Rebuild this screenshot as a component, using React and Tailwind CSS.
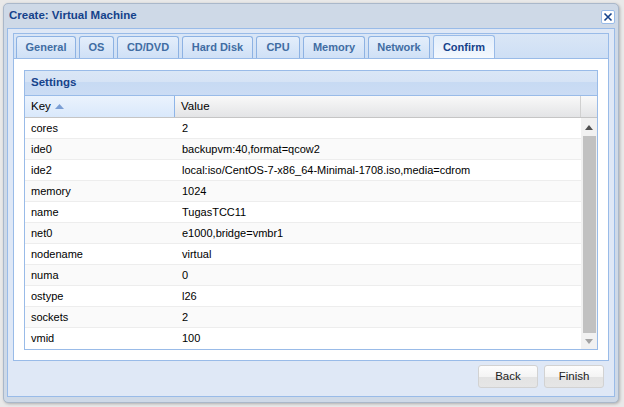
import React from 'react';

const tabs = [
  { label: 'General', w: 'w-[60px]' },
  { label: 'OS', w: 'w-[35px]' },
  { label: 'CD/DVD', w: 'w-[62px]' },
  { label: 'Hard Disk', w: 'w-[71px]' },
  { label: 'CPU', w: 'w-[44px]' },
  { label: 'Memory', w: 'w-[62px]' },
  { label: 'Network', w: 'w-[62px]' },
  { label: 'Confirm', w: 'w-[62px]', active: true },
];

const rows = [
  ['cores', '2'],
  ['ide0', 'backupvm:40,format=qcow2'],
  ['ide2', 'local:iso/CentOS-7-x86_64-Minimal-1708.iso,media=cdrom'],
  ['memory', '1024'],
  ['name', 'TugasTCC11'],
  ['net0', 'e1000,bridge=vmbr1'],
  ['nodename', 'virtual'],
  ['numa', '0'],
  ['ostype', 'l26'],
  ['sockets', '2'],
  ['vmid', '100'],
];

function Tab({ label, w, active }) {
  return (
    <div
      className={`${w} rounded-t-[3px] border border-b-0 flex items-center justify-center text-[11px] font-bold ${
        active
          ? 'h-[23px] border-[#99bbe8] bg-gradient-to-b from-[#e3eefb] to-[#f3f8fe] text-[#15428b]'
          : 'h-[22px] border-[#8db2e3] bg-gradient-to-b from-[#e4eefb] to-[#cfe0f6] text-[#416da3]'
      }`}
    >
      {label}
    </div>
  );
}

function Button({ children }) {
  return (
    <button className="w-[60px] h-[23px] rounded-[3px] border border-[#d2d2d2] bg-[linear-gradient(#fdfdfd_0%,#f4f4f4_50%,#e3e3e3_51%,#e6e6e6_100%)] text-[11.5px] text-[#222]">
      {children}
    </button>
  );
}

export default function App() {
  return (
    <div
      className="w-[624px] h-[407px] bg-[#e9e9e9] pl-[3px] pt-[3px] overflow-hidden"
      style={{ fontFamily: '"Liberation Sans", Arial, sans-serif' }}
    >
      <div className="w-[616px] h-[400px] rounded-[5px] border border-[#aab8ca] bg-[#ced9e7] flex flex-col shadow-[1px_1px_3px_rgba(0,0,0,0.25)]">
        {/* header */}
        <div className="h-[24px] flex items-center justify-between pl-[5px] pr-[3px]">
          <span className="text-[11.5px] font-bold text-[#15428b]">Create: Virtual Machine</span>
          <div className="w-[14px] h-[14px] mt-[2px] rounded-[2px] border border-[#99bbe8] bg-white flex items-center justify-center">
            <svg width="10" height="10" viewBox="0 0 10 10">
              <path d="M1.5 1.5 L8.5 8.5 M8.5 1.5 L1.5 8.5" stroke="#15428b" strokeWidth="1.6" />
            </svg>
          </div>
        </div>

        {/* body */}
        <div className="mx-[3px] mb-[5px] flex-1 border border-[#99bbe8] bg-[#dfe8f6] flex flex-col px-[5px] pt-[4px]">
          <div className="h-[328px] border border-[#99bbe8] flex flex-col">
            <div className="h-[25px] bg-gradient-to-b from-[#dae6f6] to-[#cedff5] flex items-end gap-[3px] pl-[2px] border-b border-[#99bbe8]">
              {tabs.map((t) => (
                <Tab key={t.label} {...t} />
              ))}
            </div>
            <div className="flex-1 bg-white pt-[11px] pl-[10px] pr-[10px] pb-[9px]">
              <div className="h-[280px] border border-[#99bbe8] flex flex-col">
                <div className="h-[25px] bg-[linear-gradient(#dae7f6_0%,#d6e3f5_45%,#c7daf3_46%,#cbdcf4_100%)] border-b border-[#99bbe8] flex items-center pl-[6px] text-[11.5px] font-bold text-[#15428b]">
                  Settings
                </div>
                <div className="h-[22px] flex border-b border-[#c5c5c5] text-[11.5px] text-black">
                  <div className="w-[150px] bg-gradient-to-b from-[#ebf3fd] to-[#d9e8fb] border-r border-[#8eb5e8] flex items-center pl-[6px] gap-[4px]">
                    Key
                    <svg width="9" height="5" viewBox="0 0 9 5">
                      <path d="M0 5 L4.5 0 L9 5 Z" fill="#7b9ed4" />
                    </svg>
                  </div>
                  <div className="flex-1 bg-gradient-to-b from-[#f9f9f9] to-[#e3e4e6] border-r border-[#d0d0d0] flex items-center pl-[6px]">
                    Value
                  </div>
                  <div className="w-[16px] bg-gradient-to-b from-[#f9f9f9] to-[#e3e4e6]" />
                </div>
                <div className="flex-1 flex">
                  <div className="flex-1 flex flex-col">
                    {rows.map(([k, v], i) => (
                      <div
                        key={k}
                        className={`h-[21px] flex items-center text-[11px] text-black ${
                          i < rows.length - 1 ? 'border-b border-[#ededed]' : ''
                        } ${i % 2 === 1 ? 'bg-[#fafafa]' : 'bg-white'}`}
                      >
                        <div className="w-[150px] pl-[6px]">{k}</div>
                        <div className="flex-1 pl-[7px]">{v}</div>
                      </div>
                    ))}
                  </div>
                  <div className="w-[16px] flex flex-col items-center bg-[#f1f1f1]">
                    <div className="h-[18px] flex items-center justify-center">
                      <svg width="8" height="5" viewBox="0 0 8 5">
                        <path d="M0 5 L4 0 L8 5 Z" fill="#505050" />
                      </svg>
                    </div>
                    <div className="w-[13px] flex-1 bg-[#c1c1c1]" />
                    <div className="h-[16px] flex items-center justify-center">
                      <svg width="8" height="5" viewBox="0 0 8 5">
                        <path d="M0 0 L8 0 L4 5 Z" fill="#a3a3a3" />
                      </svg>
                    </div>
                  </div>
                </div>
              </div>
            </div>
          </div>
          <div className="flex justify-end gap-[6px] pr-[5px] pt-[4px]">
            <Button>Back</Button>
            <Button>Finish</Button>
          </div>
        </div>
      </div>
    </div>
  );
}
